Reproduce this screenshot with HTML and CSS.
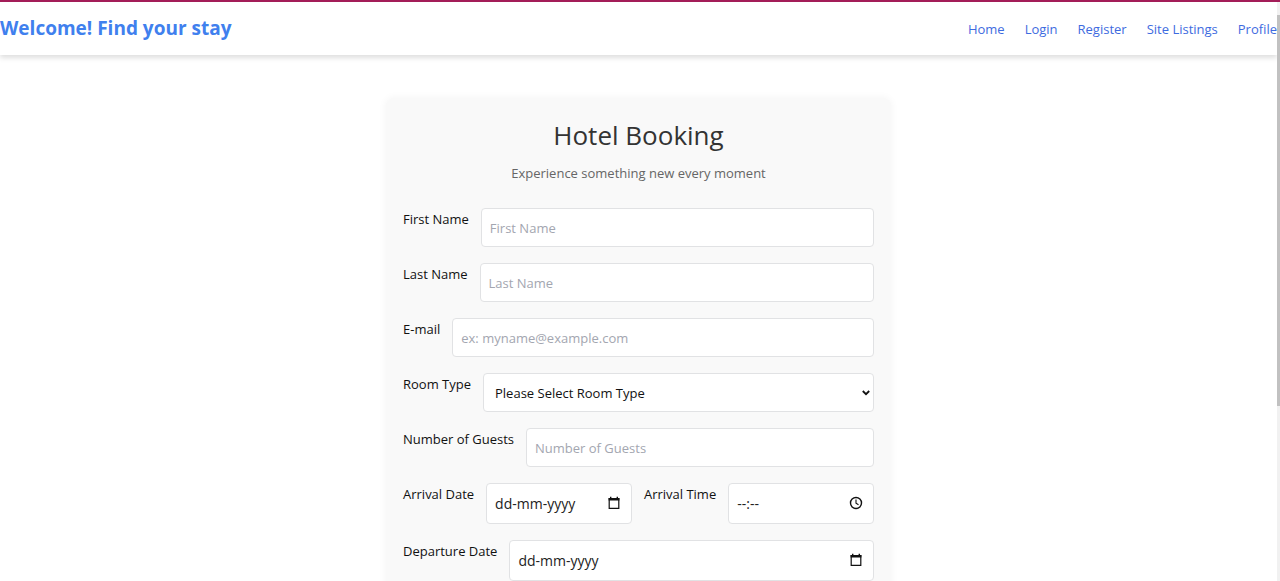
FILE: index.html
```html
<!DOCTYPE html>
<html lang="en">
<head>
<meta charset="utf-8">
<title>Hotel Booking</title>
<link rel="stylesheet" href="styles.css">
</head>
<body>
<div class="viewport">
  <div class="page">
    <header class="navbar">
      <h1 class="brand">Welcome! Find your stay</h1>
      <nav class="links">
        <a href="#home">Home</a>
        <a href="#login">Login</a>
        <a href="#register">Register</a>
        <a href="#listings">Site Listings</a>
        <a href="#profile">Profile</a>
      </nav>
    </header>
    <main class="content">
      <form class="card">
        <h2 class="title">Hotel Booking</h2>
        <p class="subtitle">Experience something new every moment</p>
        <div class="row">
          <label for="first">First Name</label>
          <input class="field" id="first" type="text" placeholder="First Name">
        </div>
        <div class="row">
          <label for="last">Last Name</label>
          <input class="field" id="last" type="text" placeholder="Last Name">
        </div>
        <div class="row">
          <label for="email">E-mail</label>
          <input class="field" id="email" type="email" placeholder="ex: myname@example.com">
        </div>
        <div class="row">
          <label for="room">Room Type</label>
          <div class="control">
            <select class="field select" id="room">
              <option>Please Select Room Type</option>
              <option>Standard</option>
              <option>Deluxe</option>
            </select>
            <svg class="chevron" viewBox="0 0 8 6" aria-hidden="true"><path d="M.8 1 4 4.2 7.2 1" fill="none" stroke="#111" stroke-width="1.8"/></svg>
          </div>
        </div>
        <div class="row">
          <label for="guests">Number of Guests</label>
          <input class="field" id="guests" type="text" inputmode="numeric" placeholder="Number of Guests">
        </div>
        <div class="row">
          <label for="arrival">Arrival Date</label>
          <div class="control">
            <input class="field picker" id="arrival" type="text" placeholder="dd-mm-yyyy">
            <button class="pick" type="button" aria-label="Choose arrival date"><svg viewBox="0 0 14 14"><path d="M2.2 2.5h9.6v9.8H2.2z" fill="none" stroke="#111" stroke-width="1.2"/><path d="M1.6 2h10.8v2.6H1.6zM3 .8h1.4V3H3zM9.6.8H11V3H9.6z" fill="#111"/></svg></button>
          </div>
          <label for="time">Arrival Time</label>
          <div class="control">
            <input class="field picker" id="time" type="text" placeholder="--:--">
            <button class="pick" type="button" aria-label="Choose arrival time"><svg viewBox="0 0 14 14"><circle cx="7" cy="7" r="5.5" fill="none" stroke="#111" stroke-width="1.4"/><path d="M7 3.6v3.6l2.5 1.6" fill="none" stroke="#111" stroke-width="1.1"/></svg></button>
          </div>
        </div>
        <div class="row">
          <label for="departure">Departure Date</label>
          <div class="control">
            <input class="field picker" id="departure" type="text" placeholder="dd-mm-yyyy">
            <button class="pick" type="button" aria-label="Choose departure date"><svg viewBox="0 0 14 14"><path d="M2.2 2.5h9.6v9.8H2.2z" fill="none" stroke="#111" stroke-width="1.2"/><path d="M1.6 2h10.8v2.6H1.6zM3 .8h1.4V3H3zM9.6.8H11V3H9.6z" fill="#111"/></svg></button>
          </div>
        </div>
      </form>
    </main>
  </div>
  <div class="scrollbar"><div class="thumb"></div></div>
</div>
</body>
</html>
```

FILE: styles.css
```css
* { box-sizing: border-box; }

body {
  margin: 0;
  background: #fff;
  color: #111;
  font: 13px/22px "Segoe UI", "Open Sans", "Noto Sans", sans-serif;
}

.viewport {
  display: flex;
  height: 100vh;
  overflow: hidden;
  border-top: 2px solid #a31d58;
}

.page { flex: 1; min-width: 0; }

.navbar {
  display: flex;
  align-items: center;
  justify-content: space-between;
  padding: 12px 0;
  box-shadow: 0 3px 5px rgba(0, 0, 0, .13);
}

.brand {
  margin: 0;
  color: #4080ee;
  font-size: 19px;
  font-weight: 700;
  line-height: 29px;
}

.links { display: flex; gap: 20px; }

.links a { color: #3e6be0; text-decoration: none; }

.content { padding: 43px 16px; }

.card {
  display: flex;
  flex-direction: column;
  gap: 16px;
  max-width: 505px;
  margin: 0 auto;
  padding: 17px 17px 32px;
  border-radius: 8px;
  background: #f9f9f9;
  box-shadow: 0 0 8px rgba(0, 0, 0, .05);
}

.title {
  margin: 2px 0 0;
  color: #333;
  font-size: 26px;
  font-weight: 400;
  line-height: 36px;
  text-align: center;
}

.subtitle {
  margin: -7px 0 8px;
  color: #666;
  text-align: center;
}

.row { display: flex; gap: 12px; }

.row label { white-space: nowrap; }

.control { position: relative; flex: 1; min-width: 0; display: flex; }

.field {
  flex: 1;
  width: 100%;
  min-width: 0;
  height: 39px;
  padding: 0 8px;
  border: 1px solid #e1e2e4;
  border-radius: 4px;
  background: #fff;
  color: #111;
  font: inherit;
}

.field::placeholder { color: #a3a6b0; opacity: 1; }

.select { appearance: none; padding: 0 11px; }

.picker { height: 41px; font-size: 14px; }

.picker::placeholder { color: #222; }

.chevron {
  position: absolute;
  top: 17px;
  right: 4px;
  width: 8px;
  height: 6px;
}

.pick {
  position: absolute;
  top: 13px;
  right: 11px;
  width: 14px;
  height: 14px;
  padding: 0;
  border: 0;
  background: none;
}

.pick svg { display: block; }

.scrollbar { width: 3px; padding-top: 13px; background: #f1f1f1; }

.thumb { height: 69%; background: #c1c1c1; }
```
